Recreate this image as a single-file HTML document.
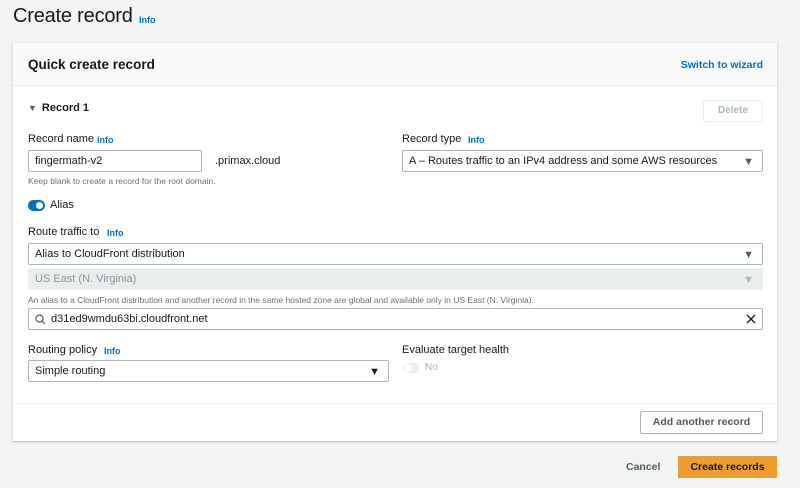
<!DOCTYPE html>
<html><head><meta charset="utf-8"><style>
*{box-sizing:border-box;margin:0;padding:0}
body{width:800px;height:488px;background:#f2f3f3;font-family:"Liberation Sans",sans-serif;color:#16191f;position:relative;overflow:hidden;font-size:11px}
.a{position:absolute;white-space:nowrap}
.info{color:#0073bb;font-weight:bold;font-size:9px}
.card{position:absolute;left:13px;top:43px;width:764px;height:398px;background:#fff;box-shadow:0 1px 2px rgba(0,0,0,.25)}
.hdr{position:absolute;left:0;top:0;width:764px;height:43px;background:#fafafa;border-bottom:1px solid #eaeded}
.inp{position:absolute;border:1px solid #aab7b8;background:#fff;height:22px;padding-left:6px;line-height:20px;font-size:11px;border-radius:2px}
.car{position:absolute;right:8px;top:1px;font-size:11px;color:#545b64}
.lbl{font-size:11px}
.hint{font-size:8.5px;color:#687078}
</style></head><body>
<div class="a" style="left:13px;top:5px;font-size:20px;letter-spacing:-0.2px">Create record</div>
<div class="a info" style="left:139px;top:15px">Info</div>
<div class="card">
<div class="hdr">
<div class="a" style="left:15px;top:14px;font-size:13.5px;font-weight:bold">Quick create record</div>
<div class="a" style="right:14px;top:16px;font-size:10.5px;font-weight:bold;color:#0073bb">Switch to wizard</div>
</div>
<div class="a" style="left:15px;top:59px;font-size:11px;font-weight:bold"><span style="font-size:9px;color:#545b64;margin-right:5px">▼</span>Record 1</div>
<div class="a" style="left:690px;top:57px;width:60px;height:22px;border:1px solid #eaeded;border-radius:2px;color:#aab7b8;font-weight:bold;font-size:10px;text-align:center;line-height:20px">Delete</div>
<div class="a lbl" style="left:15px;top:90px">Record name</div><div class="a info" style="left:84px;top:92px">Info</div>
<div class="inp" style="left:15px;top:107px;width:174px">fingermath-v2</div>
<div class="a" style="left:202px;top:112px;font-size:11px">.primax.cloud</div>
<div class="a hint" style="left:15px;top:133px">Keep blank to create a record for the root domain.</div>
<div class="a lbl" style="left:389px;top:90px">Record type</div><div class="a info" style="left:455px;top:92px">Info</div>
<div class="inp" style="left:389px;top:107px;width:361px">A – Routes traffic to an IPv4 address and some AWS resources<span class="car">▼</span></div>
<div class="a" style="left:15px;top:157px;width:17px;height:11px;border-radius:6px;background:#0073bb"><div style="position:absolute;right:2px;top:2px;width:7px;height:7px;border-radius:50%;background:#fff"></div></div>
<div class="a lbl" style="left:37px;top:156px">Alias</div>
<div class="a lbl" style="left:15px;top:183px">Route traffic to</div><div class="a info" style="left:94px;top:185px">Info</div>
<div class="inp" style="left:15px;top:200px;width:735px">Alias to CloudFront distribution<span class="car">▼</span></div>
<div class="inp" style="left:15px;top:225px;width:735px;background:#eaeded;border-color:#eaeded;color:#879596">US East (N. Virginia)<span class="car" style="color:#aab7b8">▼</span></div>
<div class="a hint" style="left:15px;top:252px">An alias to a CloudFront distribution and another record in the same hosted zone are global and available only in US East (N. Virginia).</div>
<div class="inp" style="left:15px;top:265px;width:735px;padding-left:22px">d31ed9wmdu63bi.cloudfront.net
<svg style="position:absolute;left:6px;top:5px" width="11" height="11" viewBox="0 0 11 11"><circle cx="4.5" cy="4.5" r="3.5" fill="none" stroke="#545b64" stroke-width="1.2"/><path d="M7 7l3 3" stroke="#545b64" stroke-width="1.2"/></svg>
<svg style="position:absolute;right:6px;top:5px" width="10" height="10" viewBox="0 0 10 10"><path d="M1 1l8 8M9 1l-8 8" stroke="#16191f" stroke-width="1.3"/></svg></div>
<div class="a lbl" style="left:15px;top:301px">Routing policy</div><div class="a info" style="left:91px;top:303px">Info</div>
<div class="inp" style="left:15px;top:317px;width:361px">Simple routing<span class="car" style="color:#16191f">▼</span></div>
<div class="a lbl" style="left:389px;top:301px">Evaluate target health</div>
<div class="a" style="left:390px;top:320px;width:16px;height:10px;border-radius:6px;background:#eaeded"><div style="position:absolute;left:1px;top:1px;width:8px;height:8px;border-radius:50%;background:#fff"></div></div>
<div class="a" style="left:412px;top:319px;color:#aab7b8;font-size:10px">No</div>
<div class="a" style="left:0;top:360px;width:764px;height:1px;background:#f2f3f3"></div>
<div class="a" style="left:627px;top:368px;width:123px;height:23px;border:1px solid #aab7b8;border-radius:2px;text-align:center;line-height:21px;font-weight:bold;font-size:10.5px;color:#545b64">Add another record</div>
</div>
<div class="a" style="left:626px;top:461px;font-weight:bold;font-size:10.5px;color:#545b64">Cancel</div>
<div class="a" style="left:678px;top:456px;width:99px;height:22px;background:#ec9d33;text-align:center;line-height:22px;font-weight:bold;font-size:10.5px;color:#16191f">Create records</div>
</body></html>
